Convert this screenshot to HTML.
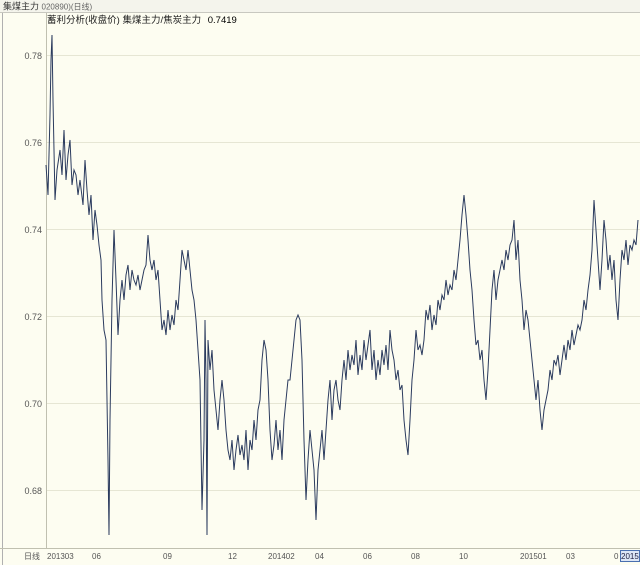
<!DOCTYPE html>
<html><head><meta charset="utf-8"><style>
body{margin:0;width:640px;height:565px;overflow:hidden;background:#fdfdf1;font-family:"Liberation Sans","Noto Sans CJK SC",sans-serif;}
svg{display:block}
</style></head><body>
<svg width="640" height="565" xmlns="http://www.w3.org/2000/svg">
<rect width="640" height="565" fill="#fdfdf1"/>
<rect x="0" y="0" width="640" height="12" fill="#f4f4ec"/>
<line x1="0" y1="12.5" x2="640" y2="12.5" stroke="#c8c8c0"/>
<line x1="2.5" y1="13" x2="2.5" y2="565" stroke="#b0b0b0"/>
<text x="3" y="9.5" font-size="9" fill="#333">集煤主力 <tspan font-size="8" fill="#666">020890)(日线)</tspan></text>
<text x="47" y="23" font-size="9.5" fill="#222">蓄利分析(收盘价) 集煤主力/焦炭主力 <tspan dx="4" fill="#000">0.7419</tspan></text>
<g stroke="#e6e6d4" stroke-width="1">
<line x1="46" y1="55.5" x2="640" y2="55.5"/><line x1="46" y1="142.5" x2="640" y2="142.5"/>
<line x1="46" y1="229.5" x2="640" y2="229.5"/><line x1="46" y1="316.5" x2="640" y2="316.5"/>
<line x1="46" y1="403.5" x2="640" y2="403.5"/><line x1="46" y1="490.5" x2="640" y2="490.5"/>
</g>
<line x1="46.5" y1="13" x2="46.5" y2="548" stroke="#c0c0b0"/>
<line x1="0" y1="548.5" x2="640" y2="548.5" stroke="#c0c0b0"/>
<g font-size="9" fill="#555" text-anchor="end">
<text x="42" y="59">0.78</text><text x="42" y="146">0.76</text><text x="42" y="233">0.74</text>
<text x="42" y="320">0.72</text><text x="42" y="407">0.70</text><text x="42" y="494">0.68</text>
</g>
<g font-size="8" fill="#555">
<text x="24" y="559">日线</text><text x="47" y="559">201303</text><text x="92" y="559">06</text>
<text x="163" y="559">09</text><text x="228" y="559">12</text><text x="268" y="559">201402</text>
<text x="315" y="559">04</text><text x="363" y="559">06</text><text x="411" y="559">08</text>
<text x="459" y="559">10</text><text x="520" y="559">201501</text><text x="566" y="559">03</text>
<text x="614" y="559">0</text>
</g>
<rect x="620.5" y="550.5" width="19" height="11" fill="#dde6f6" stroke="#4a6fb0"/>
<text x="621" y="559" font-size="8" fill="#224">2015</text>
<polyline fill="none" stroke="#2b3b5e" stroke-width="1" points="46,165 48,195 50,115 51,60 52,35 53,100 55,200 57,170 60,150 62,175 64,130 66,180 68,155 70,140 72,185 74,170 76,175 78,195 80,180 83,205 85,160 87,190 89,215 91,195 93,240 95,210 97,225 99,245 101,260 102,300 104,330 106,340 108,460 109,535 110,420 112,300 114,230 116,280 118,335 120,300 122,280 124,300 126,275 128,265 130,290 132,270 134,280 136,285 138,275 140,290 142,280 144,270 146,265 148,235 150,260 152,270 154,260 156,280 158,270 160,300 162,330 164,320 166,335 168,310 170,330 172,315 174,325 176,300 178,310 180,280 182,250 184,260 186,270 188,250 190,270 192,290 194,300 196,320 198,350 200,380 202,510 204,440 205,320 206,380 207,535 208,340 210,370 212,350 214,390 216,410 218,430 220,400 222,380 224,400 226,430 228,450 230,460 232,440 234,470 236,450 238,435 240,455 242,445 244,460 246,430 248,470 250,440 252,450 254,420 256,440 258,410 260,400 262,360 264,340 266,350 268,380 270,430 272,460 274,445 276,420 278,450 280,430 282,460 284,420 286,400 288,380 290,380 292,360 294,340 296,320 298,315 300,320 302,360 304,440 306,500 308,460 310,430 312,450 314,470 316,520 318,470 320,450 322,430 324,460 326,430 328,400 330,380 332,420 334,390 336,380 338,400 340,410 342,380 344,360 346,380 348,350 350,370 352,355 354,365 356,340 358,375 360,355 362,370 364,340 366,360 368,345 370,330 372,370 374,350 376,380 378,360 380,375 382,350 384,365 386,345 388,370 390,330 392,350 394,360 396,380 398,370 400,390 402,385 404,420 406,440 408,455 410,420 412,380 414,360 416,330 418,350 420,345 422,355 424,340 426,310 428,320 430,305 432,330 434,315 436,325 438,300 440,310 442,295 444,300 446,280 448,295 450,285 452,290 454,270 456,280 458,260 460,240 462,215 464,195 466,215 468,240 470,270 472,290 474,320 476,345 478,340 480,360 482,350 484,380 486,400 488,370 490,330 492,290 494,270 496,300 498,280 500,270 502,260 504,270 506,250 508,260 510,245 512,240 514,220 516,260 518,240 520,280 522,300 524,330 526,310 528,320 530,340 532,360 534,380 536,400 538,380 540,410 542,430 544,410 546,400 548,390 550,370 552,380 554,360 556,365 558,355 560,375 562,360 564,345 566,360 568,340 570,350 572,330 574,345 576,335 578,325 580,330 582,320 584,300 586,310 588,290 590,275 592,250 594,200 596,230 598,260 600,290 602,260 604,220 606,240 608,270 610,255 612,280 614,260 616,300 618,320 620,280 622,250 624,260 626,240 628,265 630,245 632,250 634,240 636,245 638,220"/>
</svg>
</body></html>
